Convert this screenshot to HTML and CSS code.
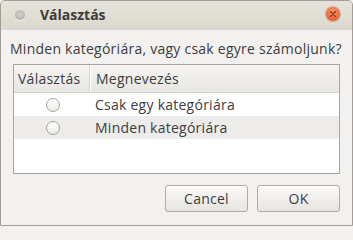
FILE: index.html
```html
<!DOCTYPE html>
<html>
<head>
<meta charset="utf-8">
<link rel="stylesheet" href="styles.css">
</head>
<body>
<div class="window">
  <div class="titlebar">
    <span class="dot"></span>
    <span class="title">Választás</span>
    <span class="close">
      <svg width="8" height="8" viewBox="0 0 8 8"><path d="M1.5 1.5 L6.5 6.5 M6.5 1.5 L1.5 6.5" stroke="#6b3318" stroke-width="1.1" stroke-linecap="round"/></svg>
    </span>
  </div>
  <div class="content">
    <div class="prompt">Minden kategóriára, vagy csak egyre számoljunk?</div>
    <div class="tree">
      <div class="row header">
        <div class="col1 hcell">Választás</div>
        <div class="col2 hcell">Megnevezés</div>
      </div>
      <div class="row">
        <div class="col1"><span class="radio"></span></div>
        <div class="col2">Csak egy kategóriára</div>
      </div>
      <div class="row alt">
        <div class="col1"><span class="radio"></span></div>
        <div class="col2">Minden kategóriára</div>
      </div>
    </div>
    <div class="buttons">
      <button class="btn">Cancel</button>
      <button class="btn">OK</button>
    </div>
  </div>
</div>
</body>
</html>
```
FILE: styles.css
```css
html, body {
  margin: 0;
  padding: 0;
  background: #f2f1f0;
}
body {
  font-family: "Open Sans", "DejaVu Sans", sans-serif;
  color: #3c3c3c;
  font-size: 14px;
  letter-spacing: 0.25px;
}
.window {
  width: 353px;
  height: 226px;
  box-sizing: border-box;
  border: 1px solid #a29d94;
  border-radius: 5px 5px 0 0;
  background: #f2f1f0;
  overflow: hidden;
  display: flex;
  flex-direction: column;
}
.titlebar {
  height: 29px;
  flex: none;
  display: flex;
  align-items: center;
  background: linear-gradient(#e6e3dc, #dcd8cf);
  position: relative;
}
.dot {
  width: 10px;
  height: 10px;
  border-radius: 50%;
  margin-left: 14px;
  margin-top: -1px;
  background: radial-gradient(circle at 50% 40%, #d4d1cb 0%, #bfbbb4 55%, #a8a49c 100%);
  box-shadow: 0 1px 0 rgba(255,255,255,0.6);
}
.title {
  margin-left: 15px;
  margin-top: -2px;
  font-weight: bold;
  font-size: 14px;
  letter-spacing: 0;
  color: #3c3b37;
}
.close {
  position: absolute;
  left: 325px;
  top: 6px;
  width: 14px;
  height: 14px;
  border-radius: 50%;
  background: radial-gradient(circle at 50% 35%, #fb9a6d 0%, #f2703e 50%, #dd5520 100%);
  box-shadow: 0 0 0 1px rgba(170,80,40,0.35);
  display: flex;
  align-items: center;
  justify-content: center;
}
.content {
  flex: 1;
  display: flex;
  flex-direction: column;
  padding: 11px 12px 0 9px;
}
.prompt {
  line-height: 16px;
  height: 16px;
  white-space: nowrap;
}
.tree {
  margin-top: 7px;
  margin-left: 3px;
  width: 327px;
  height: 110px;
  box-sizing: border-box;
  border: 1px solid #aaa59c;
  background: #ffffff;
}
.row {
  display: flex;
  height: 23px;
  align-items: center;
}
.row.alt {
  background: #edecea;
}
.row.header {
  height: 27px;
  background: linear-gradient(#f6f5f3, #e8e6e2);
  border-bottom: 1px solid #d8d5cf;
  align-items: stretch;
}
.col1 {
  width: 76px;
  flex: none;
  display: flex;
  justify-content: center;
  align-items: center;
}
.col2 {
  flex: 1;
  padding-left: 5px;
  white-space: nowrap;
}
.hcell {
  display: flex;
  align-items: center;
}
.header .col1 {
  border-right: 1px solid #d6d3cd;
  box-shadow: 1px 0 0 #ffffff;
  justify-content: flex-start;
  padding-left: 4px;
  box-sizing: border-box;
  white-space: nowrap;
}
.header .col2 {
  padding-left: 6px;
}
.radio {
  width: 12px;
  height: 12px;
  border-radius: 50%;
  border: 1px solid #a7a39c;
  background: linear-gradient(#ffffff, #ecebe8);
  margin-left: 1px;
}
.buttons {
  display: flex;
  justify-content: flex-end;
  gap: 9px;
  margin-top: 11px;
}
.btn {
  width: 83px;
  height: 27px;
  box-sizing: border-box;
  border: 1px solid #b0aba3;
  border-radius: 3px;
  background: linear-gradient(#fbfaf9, #e6e4e0);
  font-family: "Open Sans", "DejaVu Sans", sans-serif;
  font-size: 14px;
  letter-spacing: 0.25px;
  color: #3c3c3c;
  padding: 0;
  box-shadow: inset 0 1px 0 #ffffff;
}
```
